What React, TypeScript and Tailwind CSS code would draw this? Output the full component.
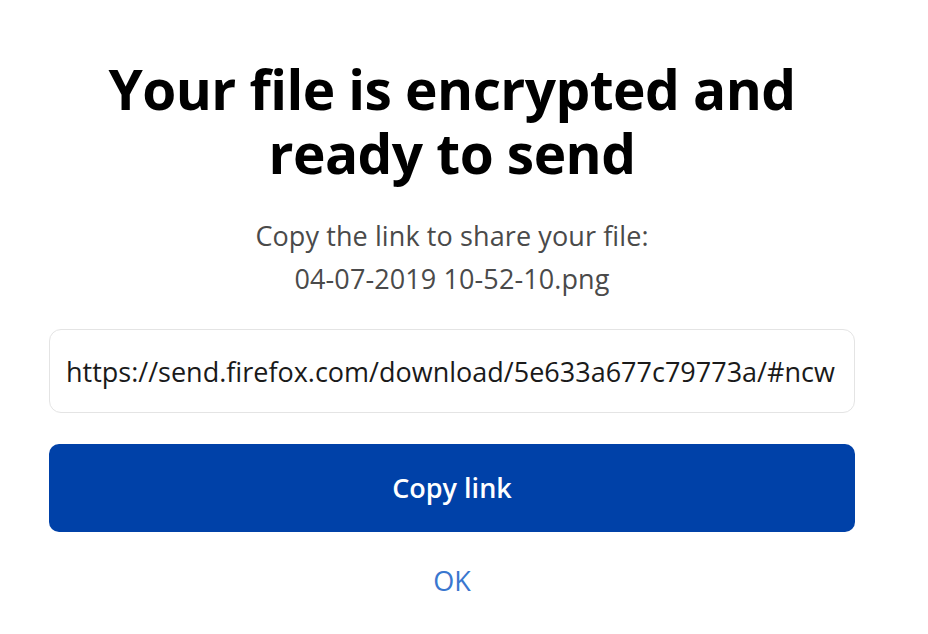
import React from 'react';

export default function App() {
  const link = 'https://send.firefox.com/download/5e633a677c79773a/#ncw';

  return (
    <div
      className="w-[928px] h-[634px] bg-white overflow-hidden"
      style={{ fontFamily: '"Open Sans", "Noto Sans", sans-serif' }}
    >
      <div className="ml-[49px] w-[806px] flex flex-col items-center">
        <h1 className="mt-[57px] w-[720px] text-center text-[55px] leading-[64px] font-bold text-black tracking-[-0.55px]">
          Your file is encrypted and ready to send
        </h1>

        <div className="mt-[29px] text-center text-[27px] leading-[43px] text-[#4a4a4a] tracking-[0.1px]">
          <p>Copy the link to share your file:</p>
          <p>04-07-2019 10-52-10.png</p>
        </div>

        {/* Share link */}
        <input
          readOnly
          value={link}
          className="mt-[29px] w-[806px] h-[84px] px-[16px] rounded-[12px] border border-[#e4e4e4] bg-white text-[27px] text-[#1a1a1a] outline-none"
          style={{ fontFamily: '"Open Sans", "Noto Sans", sans-serif' }}
        />

        <button className="mt-[31px] w-[806px] h-[88px] rounded-[10px] bg-[#0041a8] text-white text-[27px] font-semibold">
          Copy link
        </button>

        <button className="mt-[29px] text-[27px] text-[#3a77cf]">OK</button>
      </div>
    </div>
  );
}
